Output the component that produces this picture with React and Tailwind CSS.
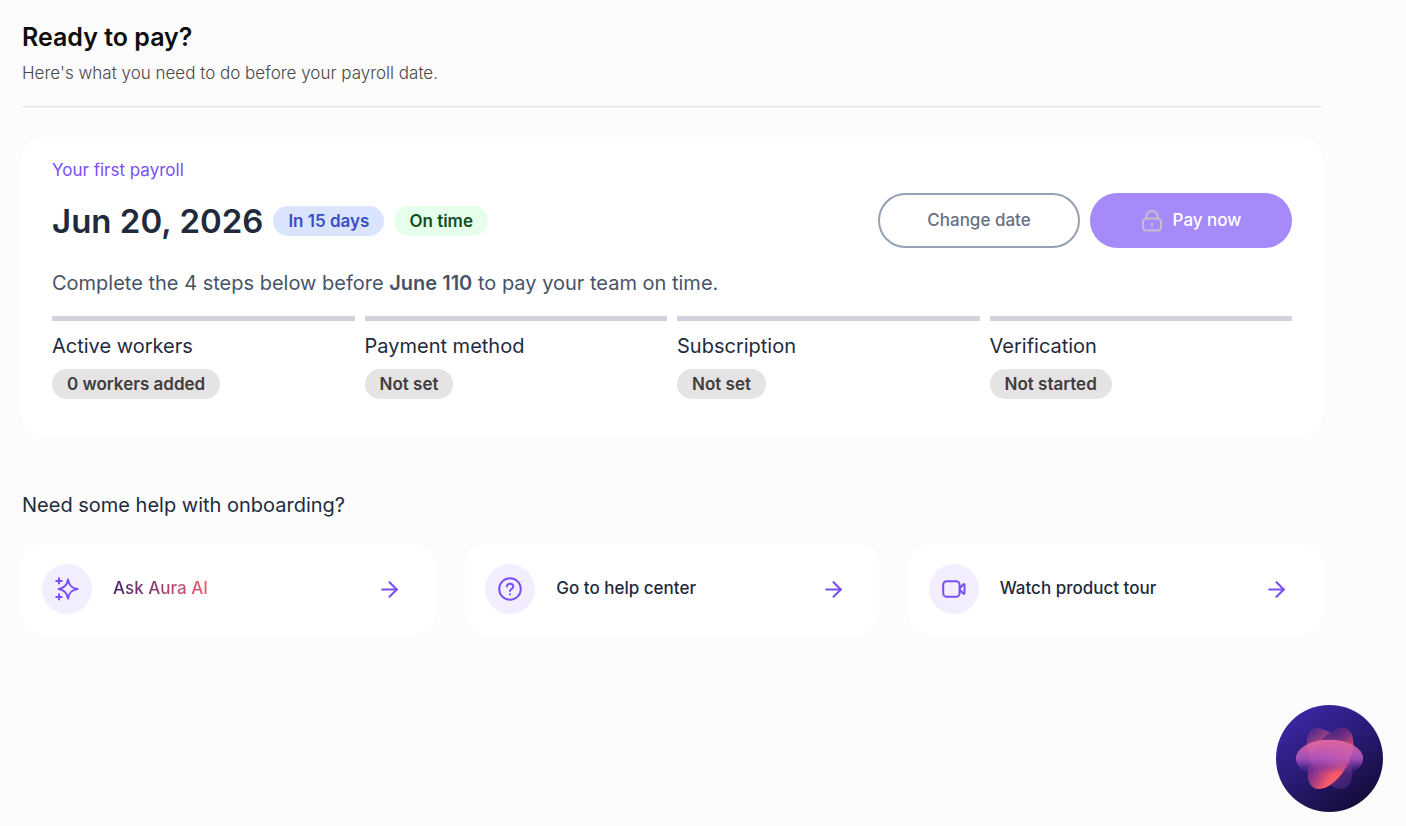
// src/pages/PayrollOnboarding.jsx
import { ArrowRight } from "lucide-react";

const STEPS = [
  { title: "Active workers", status: "0 workers added" },
  { title: "Payment method", status: "Not set" },
  { title: "Subscription", status: "Not set" },
  { title: "Verification", status: "Not started" },
];

const HELP_LINKS = [
  { title: "Ask Aura AI", icon: SparkleIcon, gradient: true },
  { title: "Go to help center", icon: HelpIcon },
  { title: "Watch product tour", icon: VideoIcon },
];

function SparkleIcon() {
  return (
    <svg width="26" height="26" viewBox="0 0 26 26" fill="none" stroke="currentColor" strokeWidth="2" strokeLinecap="round" strokeLinejoin="round">
      <path d="M14 3.4C14.9 9.4 17.4 12.1 23.6 13C17.4 13.9 14.9 16.6 14 22.6C13.1 16.6 10.6 13.9 4.6 13C10.6 12.1 13.1 9.4 14 3.4Z" />
      <path d="M5 2.2v5.4M2.2 5h5.6M5 18.2v5.4M2.2 21h5.6" />
    </svg>
  );
}

function HelpIcon() {
  return (
    <svg width="26" height="26" viewBox="0 0 26 26" fill="none" stroke="currentColor" strokeWidth="2" strokeLinecap="round" strokeLinejoin="round">
      <circle cx="13" cy="13" r="10.8" />
      <path d="M9.8 10.4C10 8.7 11.3 7.7 13 7.7c1.8 0 3.3 1.1 3.3 2.8 0 1.4-.9 2-1.9 2.6-.9.5-1.4 1-1.4 1.8" />
      <path d="M13 18.3v.1" />
    </svg>
  );
}

function VideoIcon() {
  return (
    <svg width="26" height="26" viewBox="0 0 26 26" fill="none" stroke="currentColor" strokeWidth="2" strokeLinecap="round" strokeLinejoin="round">
      <rect x="2.2" y="5.2" width="16.4" height="15.6" rx="3.6" />
      <path d="M18.8 12l3.8-3.7c.5-.4.9-.2.9.4v8.6c0 .6-.4.8-.9.4L18.8 14z" />
    </svg>
  );
}

function LockIcon() {
  return (
    <svg width="22" height="24" viewBox="0 0 22 24" fill="none" stroke="currentColor" strokeWidth="2" strokeLinecap="round">
      <rect x="2" y="9.6" width="18" height="12" rx="3.6" />
      <path d="M5.4 9.4V7.6a5.6 5.6 0 0 1 11.2 0v1.8" />
      <path d="M11 14.4v2.4" />
    </svg>
  );
}

// Gradients are counter-rotated so that their direction stays upright on the tilted petals
function AuraLogo() {
  return (
    <svg className="block size-full" viewBox="0 0 108 108" aria-hidden="true">
      <defs>
        <linearGradient id="aura-bg" x1="0.2" y1="0.05" x2="0.8" y2="0.95">
          <stop offset="0" stopColor="#3b27a3" />
          <stop offset="0.5" stopColor="#281a72" />
          <stop offset="1" stopColor="#150b36" />
        </linearGradient>
        <linearGradient id="aura-back" gradientUnits="userSpaceOnUse" x1="34" y1="26" x2="74" y2="82" gradientTransform="rotate(-60 54 54)">
          <stop offset="0" stopColor="#a0408a" stopOpacity="0.3" />
          <stop offset="0.22" stopColor="#d0507f" stopOpacity="0.75" />
          <stop offset="0.6" stopColor="#a53d86" stopOpacity="0.6" />
          <stop offset="1" stopColor="#4e2a90" stopOpacity="0.5" />
        </linearGradient>
        <linearGradient id="aura-front" gradientUnits="userSpaceOnUse" x1="36" y1="44" x2="68" y2="66" gradientTransform="rotate(60 55 54)">
          <stop offset="0" stopColor="#5a2a92" stopOpacity="0.55" />
          <stop offset="0.45" stopColor="#a53b8c" stopOpacity="0.85" />
          <stop offset="0.85" stopColor="#fa5a68" />
          <stop offset="1" stopColor="#fa5a68" />
        </linearGradient>
        <linearGradient id="aura-tip" gradientUnits="userSpaceOnUse" x1="62" y1="20" x2="70" y2="52" gradientTransform="rotate(60 55 54)">
          <stop offset="0" stopColor="#43247a" stopOpacity="0.75" />
          <stop offset="1" stopColor="#43247a" stopOpacity="0" />
        </linearGradient>
        <linearGradient id="aura-dome" x1="0" y1="0" x2="0" y2="1">
          <stop offset="0" stopColor="#ed6ba0" stopOpacity="0.9" />
          <stop offset="0.5" stopColor="#b658c2" stopOpacity="0.85" />
          <stop offset="0.62" stopColor="#a04abb" stopOpacity="0.7" />
          <stop offset="0.76" stopColor="#7a37a6" stopOpacity="0.4" />
          <stop offset="0.9" stopColor="#6a30a0" stopOpacity="0" />
        </linearGradient>
      </defs>
      <circle cx="54" cy="54" r="54" fill="url(#aura-bg)" />
      <ellipse cx="54" cy="54" rx="34" ry="18" transform="rotate(60 54 54)" fill="url(#aura-back)" />
      <ellipse cx="55" cy="54" rx="34" ry="18" transform="rotate(-60 55 54)" fill="url(#aura-front)" />
      <ellipse cx="55" cy="54" rx="34" ry="18" transform="rotate(-60 55 54)" fill="url(#aura-tip)" />
      <ellipse cx="54" cy="54" rx="34" ry="19" fill="url(#aura-dome)" />
    </svg>
  );
}

function HelpCard({ title, icon: Icon, gradient }) {
  return (
    <a href="#" className="flex items-center gap-[21px] rounded-[20px] bg-white py-5 pl-5 pr-[33px]">
      <span className="flex size-[50px] shrink-0 items-center justify-center rounded-full bg-[#f3eeff] text-[#7a4ff5]">
        <Icon />
      </span>
      <span
        className={
          gradient
            ? "bg-gradient-to-r from-[#43206b] to-[#f9566b] bg-clip-text text-[17px] font-medium text-transparent"
            : "text-[17px] font-medium text-[#1f2b3d]"
        }
      >
        {title}
      </span>
      <ArrowRight className="ml-auto text-[#7a4ff5]" size={25} strokeWidth={2} />
    </a>
  );
}

export default function App() {
  return (
    <div className="min-h-screen bg-[#fcfcfc] pb-10 pl-[22px] pr-[84px] pt-[21px] font-['Inter',sans-serif]">
      <header className="border-b border-[#e3e3e3] pb-[21px]">
        <h1 className="text-[25px] font-semibold leading-8 text-[#0d0d0d]">Ready to pay?</h1>
        <p className="mt-2 text-[17px] font-light leading-6 text-[#4a4747]">
          Here's what you need to do before your payroll date.
        </p>
      </header>

      <section className="mt-[30px] rounded-[20px] bg-white px-[30px] pb-9 pt-[21px]">
        <p className="text-[17px] leading-6 text-[#7a4ff5]">Your first payroll</p>

        <div className="mt-[11px] flex flex-wrap items-center justify-between gap-3">
          <div className="flex items-center gap-[10px]">
            <h2 className="text-[33px] font-semibold leading-10 text-[#1f2b3d]">Jun 20, 2026</h2>
            <span className="rounded-full bg-[#dbe4ff] px-[15px] text-[17px] font-semibold leading-[30px] text-[#3b4fc4]">
              In 15 days
            </span>
            <span className="rounded-full bg-[#e6ffea] px-[15px] text-[17px] font-semibold leading-[30px] text-[#0f4f21]">
              On time
            </span>
          </div>
          <div className="flex gap-[10px]">
            <button
              type="button"
              className="h-[55px] w-[202px] rounded-full border-2 border-[#94a0b3] text-[17px] font-medium text-[#667085]"
            >
              Change date
            </button>
            <button
              type="button"
              className="flex h-[55px] w-[202px] items-center justify-center gap-[10px] rounded-full bg-[#a68afa] text-[17px] font-medium text-white"
            >
              <span className="text-[#c9bdcb]">
                <LockIcon />
              </span>
              Pay now
            </button>
          </div>
        </div>

        <p className="mt-[21px] text-xl leading-7 text-[#475467]">
          Complete the 4 steps below before <strong className="font-semibold">June 110</strong> to pay your team on time.
        </p>

        <ul className="mt-[19px] grid grid-cols-4 gap-[10px]">
          {STEPS.map((step) => (
            <li key={step.title} className="border-t-[5px] border-[#d0d3de] pt-[11px]">
              <h3 className="text-xl leading-7 text-[#1f2b3d]">{step.title}</h3>
              <span className="mt-[9px] inline-block rounded-full bg-[#e5e3e4] px-[15px] text-[17px] font-semibold leading-[30px] text-[#403d3d]">
                {step.status}
              </span>
            </li>
          ))}
        </ul>
      </section>

      <section className="mt-14">
        <h2 className="text-xl leading-7 text-[#1f2b3d]">Need some help with onboarding?</h2>
        <div className="mt-[25px] grid grid-cols-3 gap-[30px]">
          {HELP_LINKS.map((link) => (
            <HelpCard key={link.title} {...link} />
          ))}
        </div>
      </section>

      <button
        type="button"
        aria-label="Open Aura AI"
        className="fixed bottom-[14px] right-[23px] size-[107px] rounded-full"
      >
        <AuraLogo />
      </button>
    </div>
  );
}
